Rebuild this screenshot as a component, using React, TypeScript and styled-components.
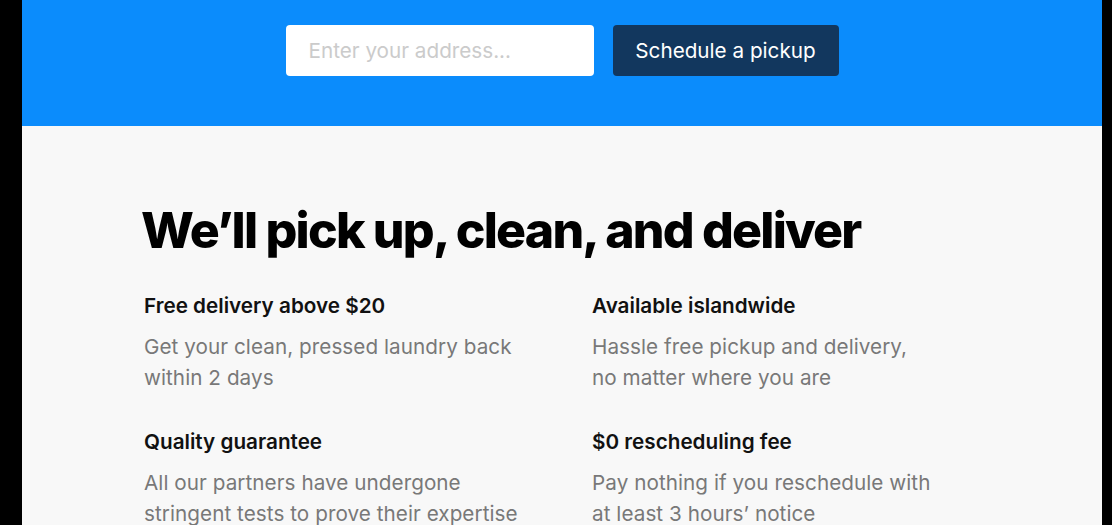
import React from "react";
import styled, { createGlobalStyle } from "styled-components";

interface IFeature {
      title: string;
      text: string[];
}

const features: IFeature[] = [
      {
            title: "Free delivery above $20",
            text: ["Get your clean, pressed laundry back", "within 2 days"],
      },
      {
            title: "Available islandwide",
            text: ["Hassle free pickup and delivery,", "no matter where you are"],
      },
      {
            title: "Quality guarantee",
            text: [
                  "All our partners have undergone",
                  "stringent tests to prove their expertise",
            ],
      },
      {
            title: "$0 rescheduling fee",
            text: [
                  "Pay nothing if you reschedule with",
                  "at least 3 hours\u2019 notice",
            ],
      },
];

const GlobalStyle = createGlobalStyle`
      html, body {
            margin: 0;
            padding: 0;
            background: #000;
            overflow: hidden;
      }
      body {
            font-family: Inter, "Noto Sans", sans-serif;
      }
`;

const Frame = styled.div`
      margin: 0 10px 0 22px;
      height: 525px;
      background: #f8f8f8;
      overflow: hidden;
`;

const Hero = styled.section`
      display: flex;
      justify-content: center;
      gap: 19px;
      padding: 25px 0 50px;
      background: #0b8cfc;
`;

const AddressInput = styled.input`
      box-sizing: border-box;
      width: 308px;
      height: 51px;
      padding: 0 23px;
      border: none;
      border-radius: 4px;
      background: #fff;
      font-family: Inter, sans-serif;
      font-size: 20.7px;
      color: #333;
      outline: none;

      &::placeholder {
            color: #cbcbcb;
      }
`;

const PickupButton = styled.button`
      box-sizing: border-box;
      width: 226px;
      height: 51px;
      padding: 0;
      border: none;
      border-radius: 4px;
      background: #12375e;
      color: #fff;
      font-family: Inter, sans-serif;
      font-size: 20.7px;
      font-weight: 400;
      cursor: pointer;
`;

const Content = styled.section`
      width: 836px;
      margin: 0 auto;
      padding-top: 74px;
`;

const Heading = styled.h1`
      margin: 0 0 32px -3px;
      font-size: 50px;
      line-height: 60px;
      font-weight: 800;
      letter-spacing: -1.8px;
      color: #000;
`;

const FeatureGrid = styled.div`
      display: grid;
      grid-template-columns: 1fr 1fr;
      column-gap: 60px;
      row-gap: 35px;
`;

const FeatureTitle = styled.h3`
      margin: 0 0 11px;
      font-size: 20.7px;
      line-height: 28px;
      font-weight: 600;
      color: #111;
`;

const FeatureText = styled.p`
      margin: 0;
      font-size: 20.7px;
      line-height: 31px;
      letter-spacing: 0.05px;
      color: #787878;
`;

const App: React.FC = () => {
      return (
            <>
                  <GlobalStyle />
                  <Frame>
                        <Hero>
                              <AddressInput placeholder="Enter your address..." />
                              <PickupButton>Schedule a pickup</PickupButton>
                        </Hero>
                        <Content>
                              <Heading>We’ll pick up, clean, and deliver</Heading>
                              <FeatureGrid>
                                    {features.map((feature) => (
                                          <div key={feature.title}>
                                                <FeatureTitle>{feature.title}</FeatureTitle>
                                                <FeatureText>
                                                      {feature.text[0]}
                                                      <br />
                                                      {feature.text[1]}
                                                </FeatureText>
                                          </div>
                                    ))}
                              </FeatureGrid>
                        </Content>
                  </Frame>
            </>
      );
};

export default App;
